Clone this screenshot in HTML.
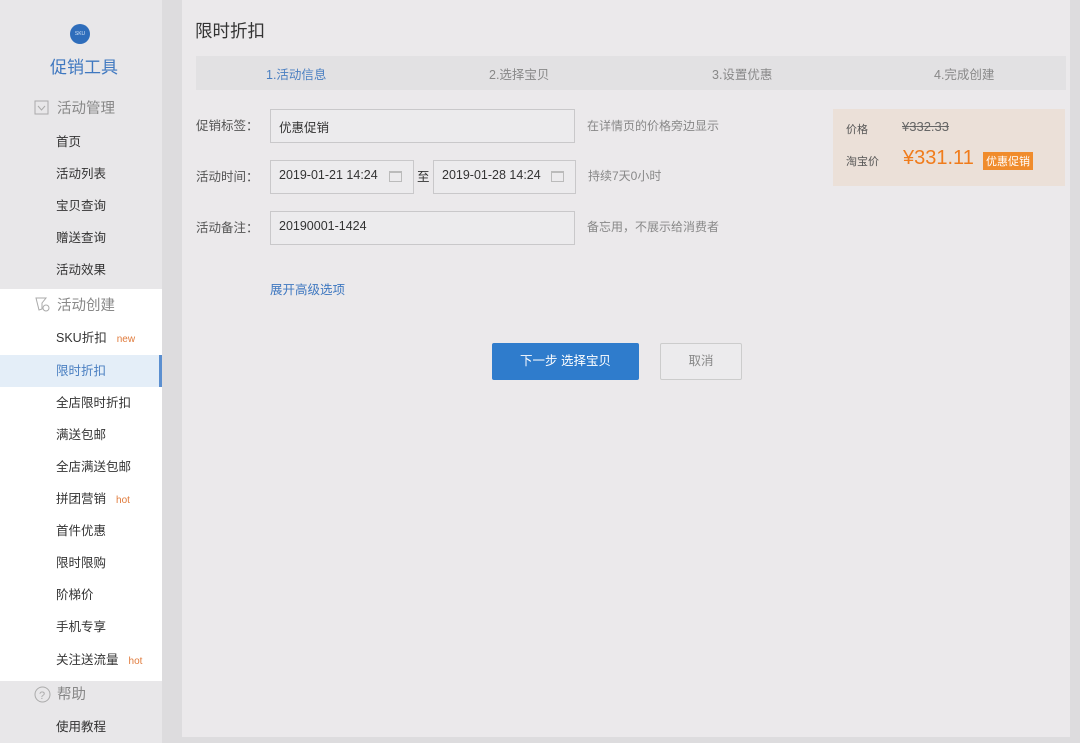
<!DOCTYPE html>
<html><head><meta charset="utf-8"><style>
*{margin:0;padding:0;box-sizing:border-box}
body{width:1080px;height:743px;background:#dddcde;font-family:"Liberation Sans","Noto Sans CJK SC",sans-serif;position:relative;overflow:hidden;color:#333}
.side{position:absolute;left:0;top:0;width:162px;height:743px;background:#e8e7e9}
.white{position:absolute;left:0;top:289px;width:162px;height:392px;background:#fff}
.sel{position:absolute;left:0;top:355px;width:162px;height:32px;background:#e4eef8;border-right:3px solid #5b8fd0}
.it{position:absolute;left:56px;font-size:12.5px;color:#333;margin-top:-3px}
.hd{position:absolute;left:57px;font-size:14.5px;color:#888;margin-top:-2px}
.tag{font-size:10px;color:#e07b3c;margin-left:10px}
.main{position:absolute;left:182px;top:0;width:888px;height:737px;background:#ebe9eb}
.a{position:absolute}
.inp{position:absolute;height:34px;border:1px solid #c9c8ca;background:#ecebed;font-size:12.5px;padding:7px 0 0 8px;color:#333}
.lbl{position:absolute;font-size:12.5px;color:#555;margin-top:-2px}
.hint{position:absolute;font-size:12px;color:#888;margin-top:-2px}
.cal{position:absolute;width:13px;height:11px;border:1px solid #bbb;border-top-width:2px}
</style></head><body>
<div class="side"></div>
<div class="white"></div>
<div class="sel"></div>
<div class="a" style="left:70px;top:24px;width:20px;height:20px;border-radius:50%;background:#2e6dbb;color:#cfe0f5;font-size:5px;text-align:center;line-height:20px">SKU</div>
<div class="a" style="left:50px;top:53px;font-size:17px;color:#3f78c0">促销工具</div>
<svg class="a" style="left:34px;top:100px" width="15" height="15"><rect x="1" y="1" width="13" height="13" fill="none" stroke="#aaa"/><path d="M4 6l3.5 4 3.5-4" fill="none" stroke="#aaa"/></svg>
<div class="hd" style="top:99px">活动管理</div>
<div class="it" style="top:134px">首页</div>
<div class="it" style="top:166px">活动列表</div>
<div class="it" style="top:198px">宝贝查询</div>
<div class="it" style="top:230px">赠送查询</div>
<div class="it" style="top:262px">活动效果</div>
<svg class="a" style="left:34px;top:296px" width="16" height="16"><path d="M2 2h10l-4 5v6l-3 1z" fill="none" stroke="#aaa"/><circle cx="12" cy="12" r="3" fill="none" stroke="#aaa"/></svg>
<div class="hd" style="top:296px">活动创建</div>
<div class="it" style="top:330px">SKU折扣<span class="tag">new</span></div>
<div class="it" style="top:363px;color:#4a7fc1">限时折扣</div>
<div class="it" style="top:395px">全店限时折扣</div>
<div class="it" style="top:427px">满送包邮</div>
<div class="it" style="top:459px">全店满送包邮</div>
<div class="it" style="top:491px">拼团营销<span class="tag">hot</span></div>
<div class="it" style="top:523px">首件优惠</div>
<div class="it" style="top:555px">限时限购</div>
<div class="it" style="top:587px">阶梯价</div>
<div class="it" style="top:619px">手机专享</div>
<div class="it" style="top:652px">关注送流量<span class="tag">hot</span></div>
<svg class="a" style="left:34px;top:686px" width="17" height="17"><circle cx="8.5" cy="8.5" r="7.5" fill="none" stroke="#aaa"/><text x="5" y="13" font-size="11" fill="#aaa" font-family="Liberation Sans">?</text></svg>
<div class="hd" style="top:685px">帮助</div>
<div class="it" style="top:719px">使用教程</div>

<div class="main"></div>
<div class="a" style="left:195px;top:18px;font-size:17.5px;color:#333">限时折扣</div>
<div class="a" style="left:196px;top:56px;width:870px;height:34px;background:#e2e1e3"></div>
<div class="a" style="left:266px;top:64px;font-size:12.5px;color:#4a7fc1">1.活动信息</div>
<div class="a" style="left:489px;top:64px;font-size:12.5px;color:#888">2.选择宝贝</div>
<div class="a" style="left:712px;top:64px;font-size:12.5px;color:#888">3.设置优惠</div>
<div class="a" style="left:934px;top:64px;font-size:12.5px;color:#888">4.完成创建</div>

<div class="lbl" style="left:196px;top:117px">促销标签：</div>
<div class="inp" style="left:270px;top:109px;width:305px">优惠促销</div>
<div class="hint" style="left:587px;top:119px">在详情页的价格旁边显示</div>

<div class="lbl" style="left:196px;top:168px">活动时间：</div>
<div class="inp" style="left:270px;top:160px;width:144px">2019-01-21 14:24</div>
<div class="cal" style="left:389px;top:171px"></div>
<div class="a" style="left:417px;top:166px;font-size:12.5px">至</div>
<div class="inp" style="left:433px;top:160px;width:143px">2019-01-28 14:24</div>
<div class="cal" style="left:551px;top:171px"></div>
<div class="hint" style="left:588px;top:169px">持续7天0小时</div>

<div class="lbl" style="left:196px;top:219px">活动备注：</div>
<div class="inp" style="left:270px;top:211px;width:305px">20190001-1424</div>
<div class="hint" style="left:587px;top:220px">备忘用，不展示给消费者</div>

<div class="a" style="left:270px;top:279px;font-size:12.5px;color:#3f78c0">展开高级选项</div>
<div class="a" style="left:492px;top:343px;width:147px;height:37px;background:#2f7ccc;color:#fff;font-size:12.5px;text-align:center;line-height:36px;border-radius:2px">下一步 选择宝贝</div>
<div class="a" style="left:660px;top:343px;width:82px;height:37px;border:1px solid #ccc;background:#ecebed;color:#888;font-size:12.5px;text-align:center;line-height:35px;border-radius:2px">取消</div>

<div class="a" style="left:833px;top:109px;width:232px;height:77px;background:#ebe0d8"></div>
<div class="a" style="left:846px;top:121px;font-size:11px;color:#555">价格</div>
<div class="a" style="left:902px;top:119px;font-size:13px;color:#666;text-decoration:line-through">¥332.33</div>
<div class="a" style="left:846px;top:153px;font-size:11px;color:#555">淘宝价</div>
<div class="a" style="left:903px;top:147px;font-size:20px;color:#f07c1c">¥331.11</div>
<div class="a" style="left:983px;top:152px;padding:1px 3px;background:#f08c2c;color:#fff;font-size:11px">优惠促销</div>
</body></html>
